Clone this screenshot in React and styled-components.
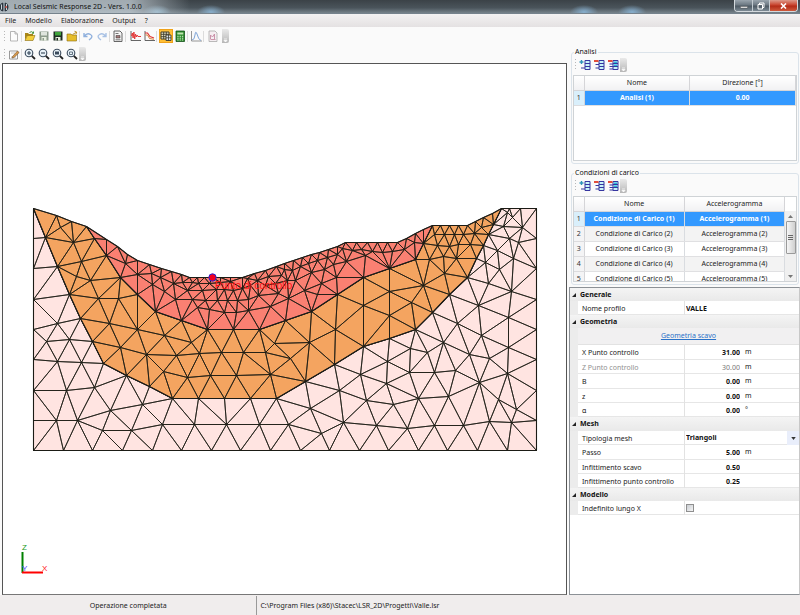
import React from "react";
import styled, { createGlobalStyle, css } from "styled-components";

const GlobalStyle = createGlobalStyle`
  * { box-sizing: border-box; }
  html, body { margin: 0; padding: 0; }
  body {
    font-family: "Noto Sans", "Open Sans", sans-serif;
    font-size: 7px;
    line-height: 10px;
    color: #222;
    background: #f0eeee;
  }
  button, input, select { font: inherit; color: inherit; }
`;

/* ---------- mesh data ---------- */

const pts = (s) => s.trim().split(/\s+/).map((p) => p.split(",").map(Number));

const LEFT_SIDE = pts("33,238 33,268 33,299 33,329 33,359 33,390 33,420 33,450");
const BOTTOM = pts(
  "63,450 92,450 122,450 152,450 181,450 211,450 240,450 270,450 300,450 329,450 359,450 388,450 418,450 447,450 477,450 507,450"
);
const RIGHT_SIDE = pts("536,450 536,420 536,390 536,359 536,329 536,299 536,268 536,238 536,208 520,208 509,208");
const BASE = pts(
  "33,208 45,237 57,266 69,294 80,318 92,341 103,363 126,375 149,386 172,398 198,398 224,398 250,398 276,398 305,381 334,364 363,346 389,338 415,329 432,312 449,294 467,277 476,258 483,245 488,234 493,224 501,208"
);
const RED_BASE = pts(
  "86,226 94,238 106,255 120,277 137,294 155,311 181,320 207,329 233,329 259,329 285,320 311,311 337,294 363,277 389,268 415,259 423,243 432,225"
);
const TOP_LEFT = pts("56,215 71,221");
const TOP_MID = pts(
  "106,239 117,246 127,254 137,260 149,264 161,268 171,271 181,274 189,277 197,277 204,277 212,277 220,277 230,277 242,277 254,273 265,270 276,266 284,263 293,260 302,257 311,254 319,252 328,249 337,246 345,242 356,242 367,242 377,242 387,242 397,242 406,238 415,233 423,229"
);
const TOP_RIGHT = pts("440,225 449,225 458,225 467,225 475,221 483,217 492,213");

const rev = (a) => [...a].reverse();

const REGIONS = [
  {
    fill: "#ffe4e1",
    outline: [BASE[0], ...LEFT_SIDE, ...BOTTOM, ...RIGHT_SIDE, ...rev(BASE).slice(0, -1)],
    inner: pts(`
      57,323 46,341 69,339 57,361 81,362 66,390 94,387 56,420 77,420 110,410 102,430 131,430 142,404
      162,424 194,424 226,424 259,424 288,424 310,408 321,433 343,422 339,390 360,374 366,400 376,425
      387,361 386,383 393,404 407,428 410,348 409,372 418,398 427,352 434,372 434,425 443,342 455,370
      448,396 463,425 457,323 469,354 481,335 489,358 479,382 489,421 508,347 507,373 498,399 511,422
      516,409 478,305 508,317 511,291 488,283 499,269 485,262 513,258 497,250 518,242 509,238 522,227
      503,226 512,217 507,212`),
  },
  {
    fill: "#f4a460",
    outline: [...BASE, ...rev(TOP_RIGHT), ...rev(RED_BASE), ...rev(TOP_LEFT)],
    inner: pts(`
      60,227 73,242 81,261 76,276 90,280 98,298 118,298 109,323 137,329 120,347 146,354 164,335 176,355
      191,342 163,371 187,377 199,353 210,375 221,352 243,352 236,375 265,352 270,374 274,343 309,342
      290,358 335,329 363,305 389,291 389,315 411,302 423,285 444,273 429,259 443,256 456,258 437,245
      449,246 458,244 470,244 434,234 444,234 454,234 463,234 474,233 481,227`),
  },
  {
    fill: "#fa8072",
    outline: [...RED_BASE, ...rev(TOP_MID)],
    inner: pts(`
      125,263 137,274 151,273 152,284 164,291 160,277 173,283 175,299 182,282 187,290 192,282 192,299
      197,307 198,283 202,290 205,300 209,309 209,283 217,300 216,289 220,282 224,312 224,289 227,300
      230,281 233,290 236,312 237,300 242,288 248,310 248,299 250,285 247,278 257,280 258,295 270,306
      265,285 268,276 275,283 278,293 281,275 284,269 292,270 287,280 288,298 300,266 295,280 304,290
      311,272 308,263 317,294 321,283 324,269 317,260 327,257 333,264 336,277 337,254 346,261 342,248
      352,250 365,255 361,249 372,251 382,252 392,251 404,249 414,242`),
  },
];

function inside([x, y], poly) {
  let hit = false;
  for (let i = 0, j = poly.length - 1; i < poly.length; j = i++) {
    const [xi, yi] = poly[i];
    const [xj, yj] = poly[j];
    if (yi > y !== yj > y && x < ((xj - xi) * (y - yi)) / (yj - yi) + xi) hit = !hit;
  }
  return hit;
}

/* Bowyer-Watson triangulation; a tiny perturbation avoids cocircular ties. */
function triangulate(points) {
  const p = points.map(([x, y], i) => [x + Math.sin(i * 12.9) * 0.01, y + Math.cos(i * 7.3) * 0.01]);
  const n = p.length;
  p.push([-20000, -20000], [20000, -20000], [0, 30000]);
  const make = (a, b, c) => {
    const [ax, ay] = p[a];
    const bx = p[b][0] - ax;
    const by = p[b][1] - ay;
    const cx = p[c][0] - ax;
    const cy = p[c][1] - ay;
    const d = 2 * (bx * cy - by * cx);
    const ux = (cy * (bx * bx + by * by) - by * (cx * cx + cy * cy)) / d;
    const uy = (bx * (cx * cx + cy * cy) - cx * (bx * bx + by * by)) / d;
    return { v: [a, b, c], x: ux + ax, y: uy + ay, r: ux * ux + uy * uy };
  };
  let tris = [make(n, n + 1, n + 2)];
  for (let i = 0; i < n; i++) {
    const edges = new Map();
    const keep = [];
    tris.forEach((t) => {
      if ((p[i][0] - t.x) ** 2 + (p[i][1] - t.y) ** 2 < t.r) {
        [[0, 1], [1, 2], [2, 0]].forEach(([a, b]) => {
          const e = [t.v[a], t.v[b]].sort((m, k) => m - k);
          const key = e.join("-");
          if (edges.has(key)) edges.delete(key);
          else edges.set(key, e);
        });
      } else keep.push(t);
    });
    edges.forEach(([a, b]) => keep.push(make(a, b, i)));
    tris = keep;
  }
  return tris.filter((t) => t.v.every((k) => k < n)).map((t) => t.v);
}

const toPath = (poly) => `M${poly.map((q) => q.join(" ")).join("L")}Z`;

const MESH = REGIONS.map(({ fill, outline, inner }) => {
  const all = [...outline, ...inner];
  const d = triangulate(all)
    .map((t) => t.map((k) => all[k]))
    .filter((t) => inside([(t[0][0] + t[1][0] + t[2][0]) / 3, (t[0][1] + t[1][1] + t[2][1]) / 3], outline))
    .map(toPath)
    .join("");
  return { fill, border: toPath(outline), d };
});

/* ---------- window frame ---------- */

const Window = styled.div`
  min-height: 100vh;
  display: flex;
  flex-direction: column;
`;

const TitleBar = styled.header`
  height: 14px;
  flex: none;
  display: flex;
  align-items: center;
  gap: 4px;
  color: #111;
  border-bottom: 1px solid #75828c;
  background:
    linear-gradient(90deg, rgba(196, 206, 213, 0.75), rgba(196, 206, 213, 0.75) 130px, transparent 190px),
    radial-gradient(ellipse 14px 7px at 157px 12px, #8fb4ca, transparent),
    radial-gradient(ellipse 14px 7px at 211px 12px, #88aecb, transparent),
    radial-gradient(ellipse 14px 7px at 584px 12px, #86aecd, transparent),
    radial-gradient(ellipse 14px 7px at 632px 12px, #86aecd, transparent),
    linear-gradient(#3b4247, #4a545b 60%, #76828a);
`;

const AppTitle = styled.h1`
  flex: 1;
  margin: 0;
  font-size: 7px;
  font-weight: 400;
`;

const WindowButtons = styled.div`
  align-self: flex-start;
  display: flex;
  margin-right: 2px;
  border: 1px solid #d3d9dd;
  border-top: 0;
  border-radius: 0 0 4px 4px;
  overflow: hidden;
`;

const WindowButton = styled.button`
  width: ${(p) => (p.$close ? 28 : 17)}px;
  height: 11px;
  padding: 0;
  border: 0;
  border-left: ${(p) => (p.$first ? 0 : 1)}px solid #c3ccd2;
  display: flex;
  align-items: center;
  justify-content: center;
  background: ${(p) =>
    p.$close ? "linear-gradient(#dc9a8b, #c9452f 45%, #b32c18 55%, #cf5a3c)" : "linear-gradient(#9aa5ae, #6c7882 45%, #4d5963 55%, #7d8b95)"};
`;

const MenuBar = styled.nav`
  height: 13px;
  flex: none;
  display: flex;
  align-items: center;
  padding-left: 5px;
  gap: 9px;
  background: linear-gradient(#f3f2f2, #e4e1e2);
`;

const MenuItem = styled.button`
  padding: 0;
  border: 0;
  background: none;
  color: #222;
`;

const Main = styled.main`
  flex: 1;
  display: flex;
  background: #fafafa;
`;

const LeftPane = styled.div`
  flex: 1;
  min-width: 0;
  display: flex;
  flex-direction: column;
  padding-left: 2px;
`;

const RightPane = styled.aside`
  width: 29%;
  min-width: 233px;
  display: flex;
  flex-direction: column;
  padding: 20px 0 0 2px;
`;

const ToolBar = styled.div`
  height: 18px;
  padding-bottom: ${(p) => (p.$grid ? 3 : 0)}px;
  display: flex;
  align-items: center;
`;

const Grip = styled.span`
  width: 1px;
  height: 11px;
  margin: 0 2px;
  background: repeating-linear-gradient(#b8b8b8 0 1px, transparent 1px 3px);
`;

const Separator = styled.span`
  width: 1px;
  height: 11px;
  margin-right: ${(p) => (p.$wide ? 2 : 1)}px;
  background: #dcdcdc;
`;

const Overflow = styled.button`
  width: 7px;
  height: 14px;
  margin-left: ${(p) => (p.$tight ? 0 : 2)}px;
  padding: 0;
  border: 0;
  border-radius: 0 2px 2px 0;
  display: flex;
  align-items: flex-end;
  justify-content: center;
  background: linear-gradient(#e9e9e9, #b7b7b7);
`;

const ToolButton = styled.button`
  width: 14px;
  height: 14px;
  padding: 0;
  border: 1px solid transparent;
  background: none;
  display: flex;
  align-items: center;
  justify-content: center;
  ${(p) =>
    p.$active &&
    css`
      background: #ffbf35;
      border-color: #efa11a;
    `}
`;

const Canvas = styled.section`
  flex: 1;
  display: flex;
  background: #fff;
  border: 1px solid #555;
  border-bottom-color: #777;
`;

const Drawing = styled.svg`
  flex: 1;
  width: 100%;
  min-width: 0;
  font-family: "Liberation Sans", sans-serif;
`;

/* ---------- side panels ---------- */

const Group = styled.fieldset`
  min-width: 0;
  margin: 0 1px ${(p) => (p.$last ? 2 : 4)}px 2px;
  padding: 0 1px 2px;
  border: 1px solid #dbe3ea;
  border-radius: 3px;
`;

const GroupTitle = styled.legend`
  margin-left: 1px;
  padding: 0 1px;
  color: #111;
`;

const TableBox = styled.div`
  height: 86px;
  overflow: hidden;
  display: flex;
  align-items: stretch;
  background: #fff;
  border: 1px solid #cfd3d6;
`;

const TableArea = styled.div`
  flex: 1;
  min-width: 0;
`;

const DataTable = styled.table`
  width: 100%;
  table-layout: fixed;
  border-collapse: collapse;
  text-align: center;
`;

const HeadCell = styled.th`
  width: ${(p) => (p.$index ? "10px" : "auto")};
  height: 14px;
  padding: 0;
  font-weight: 400;
  background: linear-gradient(#fff, #f1f1f3);
  border-right: 1px solid #d5d5d8;
  border-bottom: 1px solid #d5d5d8;
`;

const Row = styled.tr`
  height: 15px;
  background: ${(p) => (p.$selected ? "#3399ff" : p.$alt ? "#f3f3f3" : "#fff")};
  color: ${(p) => (p.$selected ? "#fff" : "#222")};
  font-weight: ${(p) => (p.$selected ? 700 : 400)};
`;

const IndexCell = styled.th`
  padding: 0;
  font-weight: 400;
  color: #333;
  background: ${(p) => (p.$selected ? "#d9effb" : "#f4f4f5")};
  border-right: 1px solid #d5d5d8;
  border-bottom: 1px solid #dcdcde;
`;

const Cell = styled.td`
  padding: 0;
  white-space: nowrap;
  border-right: 1px solid #d9dce0;
  border-bottom: 1px solid #e0e0e2;
`;

const ScrollBar = styled.div`
  width: 11px;
  margin-top: 14px;
  display: flex;
  flex-direction: column;
  align-items: center;
  background: #f0f0f0;
`;

const ScrollArrow = styled.button`
  width: 10px;
  height: 10px;
  padding: 0;
  border: 0;
  background: none;
  display: flex;
  align-items: center;
  justify-content: center;
`;

const ScrollThumb = styled.div`
  width: 10px;
  height: 33px;
  margin-bottom: auto;
  display: flex;
  align-items: center;
  justify-content: center;
  border: 1px solid #9a9a9a;
  border-radius: 1px;
  background: linear-gradient(90deg, #f6f6f6, #cfcfcf);
`;

const Properties = styled.section`
  flex: 1;
  background: #fff;
  border: 1px solid #8c9196;
  border-right-color: #c8c8c8;
`;

const Section = styled.section`
  padding-left: 8px;
  background: #ececec;
`;

const SectionTitle = styled.h2`
  height: ${(p) => (p.$tall ? 14 : 13)}px;
  margin: 0 0 0 -8px;
  padding-left: 2px;
  display: flex;
  align-items: center;
  gap: 4px;
  font-size: 7px;
  font-weight: 700;
  color: #111;
  background: linear-gradient(#f4f4f4, #e9e9e9);
`;

const LinkRow = styled.div`
  height: 17px;
  display: flex;
  align-items: center;
  justify-content: center;
  background: #f1f0f1;
  border-bottom: 1px solid #e2e2e2;
`;

const Link = styled.a`
  color: #2a72c8;
`;

const Property = styled.div`
  height: 14px;
  display: grid;
  grid-template-columns: 107px 1fr;
  background: #fff;
  border-bottom: 1px solid #e6e6e6;
  color: ${(p) => (p.$muted ? "#909090" : "#222")};
  &:nth-of-type(even):not(:last-child) { height: 15px; }
`;

const PropertyLabel = styled.label`
  padding: 2px 0 0 4px;
  line-height: 12px;
  border-right: 1px solid #e2e2e2;
`;

const PropertyValue = styled.div`
  display: flex;
  align-items: center;
`;

const TextField = styled.input`
  width: ${(p) => (p.$number ? "55px" : "100%")};
  height: 11px;
  padding: 0 0 0 1px;
  border: 0;
  outline: 0;
  background: none;
  font-weight: ${(p) => (p.disabled ? 400 : 700)};
  text-align: ${(p) => (p.$number ? "right" : "left")};
  color: ${(p) => (p.disabled ? "#777" : "#111")};
`;

const Unit = styled.span`
  margin-left: 5px;
  color: #222;
`;

const SelectWrap = styled.div`
  flex: 1;
  display: flex;
  align-items: center;
  background: linear-gradient(#e9eefb, #e9eefb) right / 12px 100% no-repeat;
`;

const Select = styled.select`
  flex: 1;
  height: 12px;
  padding: 0 0 0 1px;
  border: 0;
  outline: 0;
  appearance: none;
  background: none;
  font-weight: 700;
  color: #111;
`;

const SelectArrow = styled.svg`
  width: 5px;
  height: 3px;
  margin-right: 3px;
  pointer-events: none;
`;

const CheckBox = styled.input`
  width: 8px;
  height: 8px;
  margin: 0 0 0 1px;
  appearance: none;
  border: 1px solid #8f8f8f;
  background: linear-gradient(135deg, #c9cdd2, #f5f5f5);
`;

const StatusBar = styled.footer`
  height: 20px;
  flex: none;
  display: flex;
  align-items: stretch;
  background: #f0eded;
`;

const StatusCell = styled.div`
  flex: ${(p) => (p.$wide ? 15 : 7)};
  margin-top: 1px;
  padding: 0 3px;
  display: flex;
  align-items: center;
  justify-content: ${(p) => (p.$wide ? "flex-start" : "center")};
  border-left: ${(p) => (p.$wide ? "1px solid #999" : "0")};
`;

/* ---------- icons ---------- */

const Icon = ({ children }) => (
  <svg width="12" height="12" viewBox="0 0 12 12" aria-hidden="true">
    {children}
  </svg>
);

const folder = (
  <>
    <path d="M1 3h3l1 1h4v2H3L1 10z" fill="#a88618" />
    <path d="M1 10.5L3.3 5.5H11L9 10.5z" fill="#f3cf3a" stroke="#8c6d10" strokeWidth=".6" />
  </>
);
const disk = (c, l) => (
  <>
    <path d="M1.5 1.5h9v9h-9z" fill={c} />
    <path d="M3 2h6v3.5H3z" fill={l} />
    <path d="M3.5 7h5v3.5h-5z" fill="#e8efe0" />
    <path d="M4.5 8h1.5v2.500H4.500z" fill={c} />
  </>
);
const lens = (mark) => (
  <>
    <circle cx="5" cy="5" r="3.800" fill="#e9f2f8" stroke="#3a4a5c" strokeWidth="1.100" />
    <path d="M7.800 7.800L11 11" stroke="#222" strokeWidth="1.800" />
    {mark}
  </>
);

const ICONS = {
  blank: <path d="M2.500 1.500h4.500l2.500 2.500v7h-7zM7 1.500V4h2.500" fill="#fdfdfd" stroke="#a5a5a5" strokeWidth=".8" />,
  open: (
    <>
      {folder}
      <path d="M5.500 2.500q2-2 4 .5m0-1.500v1.800H7.800" fill="none" stroke="#3a8d2c" strokeWidth=".9" />
    </>
  ),
  save: disk("#8d9c8c", "#dfe5dd"),
  saveAs: disk("#1d2d22", "#3fa43c"),
  close: (
    <>
      <path d="M1 4h4l1 1h4.500v6H1z" fill="#e6bd2a" stroke="#8c6d10" strokeWidth=".6" />
      <path d="M6.500 4.500l3.500-2m-1.500-1.200l2.200.7-.7 2.200" fill="none" stroke="#b98a12" strokeWidth=".9" />
    </>
  ),
  undo: <path d="M2 3v3.500h3.500M2.500 6Q5 2.500 8.500 4.500T7 10" fill="none" stroke="#8fb0dd" strokeWidth="1.400" />,
  redo: <path d="M10 3v3.500H6.500M9.500 6Q7 2.500 3.500 4.500T5 10" fill="none" stroke="#a8c1e4" strokeWidth="1.400" />,
  report: (
    <>
      <path d="M2 1h6l2 2v8.500H2z" fill="#f5f5f5" stroke="#555" strokeWidth=".9" />
      <path d="M3.500 3.500h3M3.500 9.800h5" stroke="#555" strokeWidth=".8" />
      <path d="M4 5.500h4v2.500H4z" fill="#a37a7a" stroke="#333" strokeWidth=".5" />
    </>
  ),
  wave: (
    <>
      <path d="M2 1v9.500h10" fill="none" stroke="#555" strokeWidth=".9" />
      <path d="M2.500 6l.8-3 .8 5 .8-6 .8 7 .8-5 .8 3 .8-2 .8 1.500H12" fill="none" stroke="#e23a3a" strokeWidth="1" />
    </>
  ),
  decay: (
    <>
      <path d="M2 1v9.500h10" fill="none" stroke="#555" strokeWidth=".9" />
      <path d="M2 3h2.500L7 6.500l4 1.500" fill="none" stroke="#df3434" strokeWidth="1.200" />
      <path d="M2.500 5h2l2 3.500 4.500.8" fill="none" stroke="#d8833a" strokeWidth="1" />
    </>
  ),
  mesh: (
    <>
      <path d="M1 2h8v7H1z" fill="#ece7c8" stroke="#3c3b2c" />
      <path d="M3.700 2v7M6.300 2v7M1 4.300h8M1 6.700h8" stroke="#3c3b2c" strokeWidth=".9" />
      <path d="M6 5h5v5.500H6z" fill="#dfe6ef" stroke="#3c3b2c" strokeWidth=".9" />
      <path d="M8.500 5v5.500M6 7.800h5" stroke="#3c3b2c" strokeWidth=".8" />
    </>
  ),
  calc: (
    <>
      <path d="M2 1h8.500v10.500H2z" fill="#2c8b2c" stroke="#14521a" strokeWidth=".8" />
      <path d="M3.300 2.500h6v2h-6z" fill="#bfe5b0" />
      <path d="M3.300 6.300h6M3.300 8.200h6M3.300 10h6" stroke="#d7f2cf" strokeDasharray="1.300 1" strokeWidth="1" />
    </>
  ),
  curve: (
    <>
      <path d="M1.500 1v10H12" fill="none" stroke="#8b8b8b" strokeWidth=".9" />
      <path d="M2 10Q4.500 10 5 5t2-1q1.500 6 4 6.500" fill="none" stroke="#7fa5d8" strokeWidth="1" />
    </>
  ),
  result: (
    <>
      <path d="M2 1h6l2 2v8.500H2z" fill="#f5eef2" stroke="#aaa" strokeWidth=".8" />
      <path d="M3.500 9V5l2 2 2-3v5M3.500 9.500h5" fill="none" stroke="#c78aa4" strokeWidth=".9" />
    </>
  ),
  edit: (
    <>
      <path d="M1.500 3h8v8h-8z" fill="#fff" stroke="#8e8e8e" strokeWidth=".9" />
      <path d="M3 5h4M3 9h5" stroke="#aaa" strokeWidth=".7" />
      <path d="M4.500 8.500L9.500 3l1.700 1.500L6 9.500l-2 .5z" fill="#d99a4b" stroke="#73502a" strokeWidth=".6" />
    </>
  ),
  zoomIn: lens(<path d="M3 5h4M5 3v4" stroke="#345" strokeWidth="1.100" />),
  zoomOut: lens(<path d="M3 5h4" stroke="#345" strokeWidth="1.100" />),
  zoomWindow: lens(<path d="M3 3.500h4v3H3z" fill="#3a4a5c" />),
  zoomAll: lens(<path d="M3.500 4h3v2.500h-3z" fill="none" stroke="#456" strokeWidth=".8" />),
};

const GRID_BODY = (
  <>
    <path d="M6 1.500h5v9H6z" fill="#c8f3f8" stroke="#3636a0" strokeWidth="1" />
    <path d="M6 4.500h5M6 7.500h5" stroke="#3636a0" strokeWidth="1" />
  </>
);
ICONS.rowAdd = (
  <>
    {GRID_BODY}
    <path d="M.5 3h4M2.500 1v4" stroke="#2d93b9" strokeWidth="1.400" />
    <path d="M2 9h4" stroke="#3636a0" />
  </>
);
ICONS.rowRemove = (
  <>
    {GRID_BODY}
    <path d="M1 2h4.500" stroke="#e03a25" strokeWidth="1.800" />
    <path d="M2.500 5.500h3.500M2.500 9h3.500" stroke="#3636a0" />
  </>
);
ICONS.rowClear = (
  <>
    {GRID_BODY}
    <path d="M7 2.500h3v1.500H7zM7 5.500h3v1.500H7z" fill="#28b4d8" />
    <path d="M1 2h4.500" stroke="#e03a25" strokeWidth="1.800" />
    <path d="M2.500 5h3.500M2.500 7.500h3.500M2.500 10h3.500" stroke="#3636a0" />
  </>
);

const Tool = ({ icon, label, active }) => (
  <ToolButton type="button" aria-label={label} $active={active}>
    <Icon>{ICONS[icon]}</Icon>
  </ToolButton>
);

const More = ({ tight }) => (
  <Overflow type="button" aria-label="Altri comandi" $tight={tight}>
    <svg width="5" height="5" viewBox="0 0 5 5" aria-hidden="true">
      <path d="M1 1h3M1 2.500h3L2.500 4z" stroke="#fff" strokeWidth=".7" fill="#fff" />
    </svg>
  </Overflow>
);

const Triangle = ({ up }) => (
  <svg width="5" height="3" viewBox="0 0 5 3" aria-hidden="true">
    <path d={up ? "M0 3L2.500 0L5 3z" : "M0 0L2.500 3L5 0z"} fill="#777" />
  </svg>
);

const GridTools = () => (
  <ToolBar $grid>
    <Grip />
    <Tool icon="rowAdd" label="Aggiungi" />
    <Tool icon="rowRemove" label="Elimina" />
    <Tool icon="rowClear" label="Elimina tutto" />
    <More tight />
  </ToolBar>
);

const Grid = ({ columns, rows, scroll }) => (
  <TableBox>
    <TableArea>
      <DataTable>
        <thead>
          <tr>
            <HeadCell $index aria-label="Numero" />
            {columns.map((c) => (
              <HeadCell key={c} scope="col">{c}</HeadCell>
            ))}
          </tr>
        </thead>
        <tbody>
          {rows.map((r, i) => (
            <Row key={r[0]} $selected={i === 0} $alt={i % 2 === 1}>
              <IndexCell scope="row" $selected={i === 0}>{i + 1}</IndexCell>
              <Cell>{r[0]}</Cell>
              <Cell>{r[1]}</Cell>
            </Row>
          ))}
        </tbody>
      </DataTable>
    </TableArea>
    {scroll && (
      <ScrollBar>
        <ScrollArrow type="button" aria-label="Scorri su"><Triangle up /></ScrollArrow>
        <ScrollThumb>
          <svg width="5" height="6" viewBox="0 0 5 6" aria-hidden="true">
            <path d="M0 .5h5M0 2.500h5M0 4.500h5" stroke="#666" />
          </svg>
        </ScrollThumb>
        <ScrollArrow type="button" aria-label="Scorri giù"><Triangle /></ScrollArrow>
      </ScrollBar>
    )}
  </TableBox>
);

const Heading = ({ children, tall }) => (
  <SectionTitle $tall={tall}>
    <svg width="4" height="4" viewBox="0 0 4 4" aria-hidden="true">
      <path d="M4 0v4H0z" fill="#222" />
    </svg>
    {children}
  </SectionTitle>
);

const NumberProperty = ({ id, label, value, unit, muted }) => (
  <Property $muted={muted}>
    <PropertyLabel htmlFor={id}>{label}</PropertyLabel>
    <PropertyValue>
      <TextField id={id} $number disabled={muted} defaultValue={value} />
      {unit && <Unit>{unit}</Unit>}
    </PropertyValue>
  </Property>
);

const LOADS = [1, 2, 3, 4, 5].map((n) => [`Condizione di Carico (${n})`, `Accelerogramma (${n})`]);

export default function App() {
  return (
    <Window>
      <GlobalStyle />
      <TitleBar>
        <svg width="10" height="12" viewBox="0 0 10 12" aria-hidden="true">
          <circle cx="4" cy="6" r="4.500" fill="#2c3640" />
          <path d="M4 1v10M1.500 3.500v5M6.500 3v6" stroke="#dce6ee" strokeWidth=".9" />
          <circle cx="6" cy="6" r="1" fill="#c2473e" />
        </svg>
        <AppTitle>Local Seismic Response 2D - Vers. 1.0.0</AppTitle>
        <WindowButtons>
          <WindowButton type="button" aria-label="Riduci" $first>
            <svg width="8" height="6" viewBox="0 0 8 6"><path d="M.5 3.500h7v1.500h-7z" fill="#fff" stroke="#444" strokeWidth=".4" /></svg>
          </WindowButton>
          <WindowButton type="button" aria-label="Ripristina">
            <svg width="8" height="8" viewBox="0 0 8 8"><path d="M2.500 2.500V1h4.500v4.500H5.500M1 2.500h4.500V7H1z" fill="none" stroke="#fff" /></svg>
          </WindowButton>
          <WindowButton type="button" aria-label="Chiudi" $close>
            <svg width="7" height="6" viewBox="0 0 7 6"><path d="M1 .5l5 5M6 .5l-5 5" stroke="#fff" strokeWidth="1.600" /></svg>
          </WindowButton>
        </WindowButtons>
      </TitleBar>
      <MenuBar>
        {["File", "Modello", "Elaborazione", "Output", "?"].map((m) => (
          <MenuItem key={m} type="button">{m}</MenuItem>
        ))}
      </MenuBar>
      <Main>
        <LeftPane>
          <ToolBar>
            <Grip />
            <Tool icon="blank" label="Nuovo" />
            <Separator />
            <Tool icon="open" label="Apri" />
            <Tool icon="save" label="Salva" />
            <Tool icon="saveAs" label="Salva con nome" />
            <Tool icon="close" label="Chiudi progetto" />
            <Separator />
            <Tool icon="undo" label="Annulla" />
            <Tool icon="redo" label="Ripeti" />
            <Separator />
            <Tool icon="report" label="Dati generali" />
            <Separator $wide />
            <Tool icon="wave" label="Accelerogrammi" />
            <Tool icon="decay" label="Curve di decadimento" />
            <Separator $wide />
            <Tool icon="mesh" label="Mesh" active />
            <Tool icon="calc" label="Calcolo" />
            <Separator />
            <Tool icon="curve" label="Spettri" />
            <Separator $wide />
            <Tool icon="result" label="Relazione" />
            <More />
          </ToolBar>
          <ToolBar>
            <Grip />
            <Tool icon="edit" label="Modifica" />
            <Separator />
            <Tool icon="zoomIn" label="Zoom avanti" />
            <Tool icon="zoomOut" label="Zoom indietro" />
            <Tool icon="zoomWindow" label="Zoom finestra" />
            <Tool icon="zoomAll" label="Zoom tutto" />
            <More tight />
          </ToolBar>
          <Canvas aria-label="Modello">
            <Drawing viewBox="3 64 563 530">
              {MESH.map((r) => (
                <g key={r.fill} strokeLinejoin="round" transform="translate(.5 .5)">
                  <path d={r.border} fill={r.fill} stroke="#1c1c1c" strokeWidth="1.100" />
                  <path d={r.d} fill="none" stroke="#1c1c14" strokeWidth=".8" />
                </g>
              ))}
              <text x="215" y="289" fontSize="10" fill="#ff1010">Punto di controllo</text>
              <circle cx="212.500" cy="277.500" r="3.700" fill="#f00020" stroke="#2222d8" strokeWidth="1" />
              <path d="M22.500 573V552" stroke="#008000" strokeWidth="2" />
              <path d="M22 572.500H43" stroke="#ff0000" strokeWidth="2" />
              <text x="22" y="550" fontSize="8" fill="#1b9a1b">Z</text>
              <text x="22" y="571" fontSize="8" fill="#4a4aff">Y</text>
              <text x="42" y="571" fontSize="8" fill="#ff2020">X</text>
            </Drawing>
          </Canvas>
        </LeftPane>
        <RightPane>
          <Group>
            <GroupTitle>Analisi</GroupTitle>
            <GridTools />
            <Grid columns={["Nome", "Direzione [°]"]} rows={[["Analisi (1)", "0.00"]]} />
          </Group>
          <Group $last>
            <GroupTitle>Condizioni di carico</GroupTitle>
            <GridTools />
            <Grid columns={["Nome", "Accelerogramma"]} rows={LOADS} scroll />
          </Group>
          <Properties>
            <Section>
              <Heading>Generale</Heading>
              <Property>
                <PropertyLabel htmlFor="profile">Nome profilo</PropertyLabel>
                <PropertyValue><TextField id="profile" defaultValue="VALLE" /></PropertyValue>
              </Property>
            </Section>
            <Section>
              <Heading>Geometria</Heading>
              <LinkRow><Link href="#scavo">Geometria scavo</Link></LinkRow>
              <NumberProperty id="xp" label="X Punto controllo" value="31.00" unit="m" />
              <NumberProperty id="zp" label="Z Punto controllo" value="30.00" unit="m" muted />
              <NumberProperty id="b" label="B" value="0.00" unit="m" />
              <NumberProperty id="z" label="z" value="0.00" unit="m" />
              <NumberProperty id="alpha" label="α" value="0.00" unit="°" />
            </Section>
            <Section>
              <Heading tall>Mesh</Heading>
              <Property>
                <PropertyLabel htmlFor="kind">Tipologia mesh</PropertyLabel>
                <SelectWrap>
                  <Select id="kind" defaultValue="Triangoli"><option>Triangoli</option></Select>
                  <SelectArrow viewBox="0 0 6 4" aria-hidden="true"><path d="M0 0h6L3 4z" fill="#333" /></SelectArrow>
                </SelectWrap>
              </Property>
              <NumberProperty id="step" label="Passo" value="5.00" unit="m" />
              <NumberProperty id="dig" label="Infittimento scavo" value="0.50" />
              <NumberProperty id="ctrl" label="Infittimento punto controllo" value="0.25" />
            </Section>
            <Section>
              <Heading>Modello</Heading>
              <Property>
                <PropertyLabel htmlFor="inf">Indefinito lungo X</PropertyLabel>
                <PropertyValue><CheckBox id="inf" type="checkbox" /></PropertyValue>
              </Property>
            </Section>
          </Properties>
        </RightPane>
      </Main>
      <StatusBar>
        <StatusCell>Operazione completata</StatusCell>
        <StatusCell $wide>C:\Program Files (x86)\Stacec\LSR_2D\Progetti\Valle.lsr</StatusCell>
      </StatusBar>
    </Window>
  );
}
